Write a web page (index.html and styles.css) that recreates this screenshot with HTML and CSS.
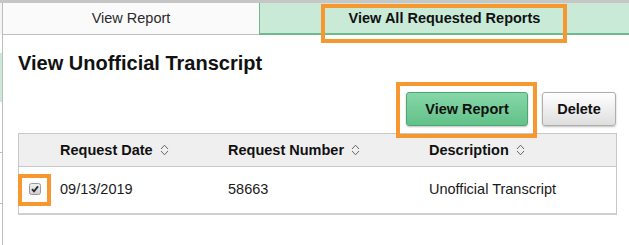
FILE: index.html
```html
<!DOCTYPE html>
<html lang="en">
<head>
    <meta charset="UTF-8">
    <title>View Unofficial Transcript</title>
    <link rel="stylesheet" href="styles.css">
</head>
<body>
    <div class="screen">
        <div class="edge"></div>
        <div class="panel">
            <div class="tabs">
                <div class="tab">View Report</div>
                <div class="tab tab-active">View All Requested Reports</div>
            </div>

            <div class="content">
                <h1 class="page-title">View Unofficial Transcript</h1>

                <div class="toolbar">
                    <button class="btn btn-primary">View Report</button>
                    <button class="btn btn-delete">Delete</button>
                </div>

                <div class="grid">
                    <div class="grid-head"></div>
                    <div class="grid-head">Request Date
                        <svg class="sort-icon" width="9" height="12" viewBox="0 0 9 12"><path d="M1 5 L4.5 1.2 L8 5 M1 7 L4.5 10.8 L8 7" fill="none" stroke="#666" stroke-width="1"/></svg>
                    </div>
                    <div class="grid-head">Request Number
                        <svg class="sort-icon" width="9" height="12" viewBox="0 0 9 12"><path d="M1 5 L4.5 1.2 L8 5 M1 7 L4.5 10.8 L8 7" fill="none" stroke="#666" stroke-width="1"/></svg>
                    </div>
                    <div class="grid-head">Description
                        <svg class="sort-icon" width="9" height="12" viewBox="0 0 9 12"><path d="M1 5 L4.5 1.2 L8 5 M1 7 L4.5 10.8 L8 7" fill="none" stroke="#666" stroke-width="1"/></svg>
                    </div>

                    <div class="grid-cell cell-check">
                        <svg width="12" height="12" viewBox="0 0 12 12">
                            <defs>
                                <linearGradient id="cb" x1="0" y1="0" x2="0" y2="1">
                                    <stop offset="0" stop-color="#f2f2f2"/>
                                    <stop offset="1" stop-color="#cfcfcf"/>
                                </linearGradient>
                            </defs>
                            <rect x="0.5" y="0.5" width="11" height="11" rx="2" fill="url(#cb)" stroke="#9a9a9a"/>
                            <path d="M3 6.2 L5 8.3 L9 3.4" fill="none" stroke="#2b2b2b" stroke-width="1.8"/>
                        </svg>
                    </div>
                    <div class="grid-cell">09/13/2019</div>
                    <div class="grid-cell">58663</div>
                    <div class="grid-cell">Unofficial Transcript</div>
                </div>
            </div>
        </div>
    </div>

    <div class="callout callout-tab"></div>
    <div class="callout callout-button"></div>
    <div class="callout callout-check"></div>
</body>
</html>
```

FILE: styles.css
```css
body {
    margin: 0;
    width: 629px;
    height: 245px;
    overflow: hidden;
    font-family: "Liberation Sans", Arial, sans-serif;
    font-size: 14.5px;
    color: #1a1a1a;
    background-color: #fff;
    position: relative;
}

.screen {
    display: flex;
    height: 245px;
    border-top: 3px solid #c6c6c6;
    box-sizing: border-box;
}

.edge {
    width: 2px;
    flex-shrink: 0;
    background: linear-gradient(to bottom,
        #f4f4f4 0, #f4f4f4 32px,
        #fff 32px, #fff 50px,
        #c9ead7 50px, #c9ead7 99px,
        #fff 99px, #fff 149px,
        #bbb 149px, #bbb 150px,
        #fff 150px, #fff 200px,
        #bbb 200px, #bbb 201px,
        #fff 201px);
}

.panel {
    flex: 1;
    border-left: 1px solid #bdbdbd;
    display: flex;
    flex-direction: column;
}

.tabs {
    display: flex;
    height: 32px;
}

.tab {
    width: 256px;
    display: flex;
    align-items: center;
    justify-content: center;
    background-color: #fafafa;
    border-bottom: 1px solid #bdbdbd;
    color: #2a2a2a;
    padding-bottom: 1px;
}

.tab-active {
    flex: 1;
    background-color: #c9ead7;
    border-left: 1px solid #6fba8d;
    border-bottom: 2px solid #6fba8d;
    font-weight: bold;
    color: #111;
}

.content {
    padding: 0 12px 0 15px;
}

.page-title {
    margin: 16px 0 0;
    font-size: 20px;
    line-height: 24px;
    font-weight: bold;
    color: #111;
}

.toolbar {
    display: flex;
    justify-content: flex-end;
    gap: 14px;
    margin-top: 17px;
    padding-right: 1px;
}

.btn {
    height: 34px;
    padding: 0;
    font-family: inherit;
    font-size: 14.5px;
    font-weight: bold;
    color: #111;
    border: 1px solid #aeaeae;
    border-radius: 3px;
    background: linear-gradient(to bottom, #ffffff, #dedede);
    box-shadow: 0 1px 2px rgba(0, 0, 0, 0.25);
}

.btn-primary {
    width: 122px;
    border-color: #4ea672;
    background: linear-gradient(to bottom, #86d7a8, #62c189);
}

.btn-delete {
    width: 74px;
}

.grid {
    display: grid;
    grid-template-columns: 41px 168px 201px 1fr;
    margin-top: 7px;
    border: 1px solid #c8c8c8;
    border-bottom: 2px solid #d0d0d0;
}

.grid-head {
    height: 32px;
    display: flex;
    align-items: center;
    background-color: #efefef;
    border-bottom: 1px solid #c8c8c8;
    font-weight: bold;
    color: #111;
}

.sort-icon {
    margin-left: 7px;
}

.grid-cell {
    height: 46px;
    display: flex;
    align-items: center;
    padding-bottom: 2px;
    box-sizing: border-box;
}

.cell-check {
    padding-left: 10px;
}

.callout {
    position: absolute;
    border: 4px solid #f7972f;
    box-sizing: border-box;
}

.callout-tab {
    left: 321px;
    top: 4px;
    width: 246px;
    height: 39px;
}

.callout-button {
    left: 396px;
    top: 82px;
    width: 141px;
    height: 56px;
}

.callout-check {
    left: 18px;
    top: 174px;
    width: 33px;
    height: 32px;
}
```
